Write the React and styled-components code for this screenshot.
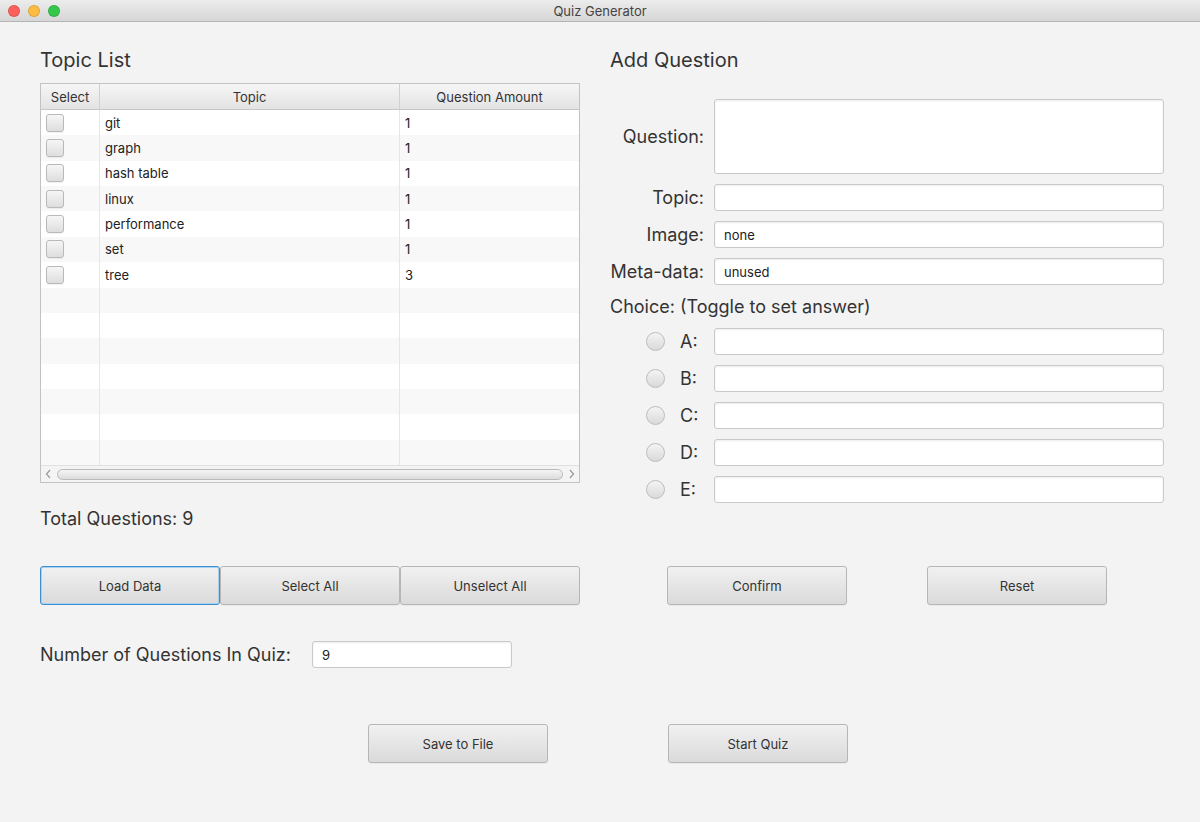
import React from "react";
import styled, { createGlobalStyle, css } from "styled-components";

const GlobalStyle = createGlobalStyle`
  html, body {
    margin: 0;
    padding: 0;
    background: #f3f3f3;
  }
  * { box-sizing: border-box; }
`;

const Window = styled.div`
  width: 1200px;
  height: 822px;
  display: flex;
  flex-direction: column;
  background: #f3f3f3;
  font-family: Inter, "Liberation Sans", sans-serif;
  color: #333;
  overflow: hidden;
`;

const TitleBar = styled.div`
  height: 22px;
  flex: none;
  display: flex;
  align-items: center;
  justify-content: center;
  position: relative;
  background: linear-gradient(#ececec, #d6d6d6);
  border-bottom: 1px solid #b4b4b4;
  font-size: 13px;
  color: #444;
`;

const Lights = styled.div`
  position: absolute;
  left: 8px;
  top: 5px;
  display: flex;
  gap: 8px;
`;

const Light = styled.span`
  width: 12px;
  height: 12px;
  border-radius: 50%;
  background: ${(p) => p.color};
  border: 1px solid rgba(0, 0, 0, 0.12);
`;

const Body = styled.div`
  flex: 1;
  padding: 26px 36px 0 40px;
  display: grid;
  grid-template-columns: 540px 554px;
  column-gap: 30px;
  row-gap: 36px;
  align-items: start;
  align-content: start;
`;

const Column = styled.div`
  display: flex;
  flex-direction: column;
`;

const Heading = styled.h2`
  margin: 0;
  font-size: 20px;
  line-height: 24px;
  font-weight: 400;
  color: #333;
`;

const Table = styled.div`
  margin-top: 11px;
  width: 540px;
  height: 400px;
  border: 1px solid #c2c2c2;
  background: #fff;
  display: flex;
  flex-direction: column;
`;

const TableRow = styled.div`
  display: grid;
  grid-template-columns: 59px 300px 1fr;
  background: ${(p) => (p.$odd ? "#f8f8f8" : "#fff")};
`;

const HeaderRow = styled(TableRow)`
  height: 26px;
  background: linear-gradient(#f6f6f6, #e3e3e3);
  border-bottom: 1px solid #c6c6c6;
`;

const HeadCell = styled.div`
  display: flex;
  align-items: center;
  justify-content: center;
  font-size: 13px;
  color: #333;
  border-right: 1px solid #d0d0d0;
  &:last-child { border-right: none; }
`;

const Rows = styled.div`
  flex: 1;
  display: grid;
  grid-template-rows: repeat(14, 1fr);
`;

const Cell = styled.div`
  display: flex;
  align-items: center;
  padding-left: 5px;
  font-size: 13px;
  color: #222;
  border-right: 1px solid #e6e6e6;
  &:last-child { border-right: none; }
`;

const Check = styled.span`
  width: 18px;
  height: 18px;
  border-radius: 3px;
  border: 1px solid #b9b9b9;
  background: linear-gradient(#f6f6f6, #dedede);
  box-shadow: 0 1px 0 rgba(0, 0, 0, 0.05);
`;

const ScrollBar = styled.div`
  height: 17px;
  border-top: 1px solid #e0e0e0;
  background: #f4f4f4;
  display: flex;
  align-items: center;
  padding: 0 4px;
  gap: 5px;
`;

const Thumb = styled.div`
  flex: 1;
  height: 11px;
  border-radius: 6px;
  border: 1px solid #b9b9b9;
  background: linear-gradient(#f5f5f5, #dcdcdc);
`;

const Arrow = styled.svg`
  width: 7px;
  height: 10px;
  flex: none;
`;

const BigText = styled.div`
  font-size: 18px;
  line-height: 22px;
  color: #333;
`;

const Total = styled(BigText)`
  margin-top: 25px;
`;

const ButtonRow = styled.div`
  display: flex;
  justify-content: ${(p) => p.$justify || "flex-start"};
  gap: ${(p) => p.$gap || 0}px;
`;

const Button = styled.button`
  width: 180px;
  height: 39px;
  border-radius: 3px;
  border: 1px solid #b6b6b6;
  background: linear-gradient(#f1f1f1, #dadada);
  font-family: Inter, "Liberation Sans", sans-serif;
  font-size: 13px;
  color: #333;
  padding: 0;
  box-shadow: 0 1px 0 rgba(0, 0, 0, 0.04);
  ${(p) =>
    p.$focused &&
    css`
      border: 1px solid #3d8fd0;
      box-shadow: inset 0 0 0 1px #a8d1f0;
    `}
`;

const QuizRow = styled.div`
  grid-column: 1 / 2;
  display: flex;
  align-items: center;
  gap: 21px;
`;

const Input = styled.div`
  height: 27px;
  width: ${(p) => (p.$width ? `${p.$width}px` : "100%")};
  background: #fff;
  border: 1px solid #c9c9c9;
  border-radius: 3px;
  box-shadow: inset 0 1px 2px rgba(0, 0, 0, 0.08);
  display: flex;
  align-items: center;
  padding-left: 9px;
  font-size: 13px;
  color: #222;
`;

const TextArea = styled(Input)`
  height: 75px;
`;

const Form = styled.div`
  margin-top: 27px;
  display: grid;
  grid-template-columns: 94px 1fr;
  column-gap: 10px;
  row-gap: 10px;
  align-items: center;
`;

const Label = styled(BigText)`
  text-align: right;
`;

const ChoiceTitle = styled(BigText)`
  grid-column: 1 / 3;
  margin-top: 1px;
`;

const ChoiceLabel = styled.div`
  display: flex;
  align-items: center;
  justify-content: flex-end;
  gap: 15px;
  padding-right: 6px;
  font-size: 18px;
  color: #333;
`;

const Letter = styled.span`
  width: 18px;
`;

const Radio = styled.span`
  width: 19px;
  height: 19px;
  border-radius: 50%;
  border: 1px solid #bdbdbd;
  background: linear-gradient(#f4f4f4, #d9d9d9);
`;

const BottomRow = styled(ButtonRow)`
  grid-column: 1 / 3;
  padding: 20px 0 0 328px;
`;

const topics = [
  ["git", 1],
  ["graph", 1],
  ["hash table", 1],
  ["linux", 1],
  ["performance", 1],
  ["set", 1],
  ["tree", 3],
];

const choices = ["A", "B", "C", "D", "E"];

const App = () => {
  const rows = Array.from({ length: 14 }, (_, i) => topics[i] || null);
  return (
    <Window>
      <GlobalStyle />
      <TitleBar>
        <Lights>
          <Light color="#fc605c" />
          <Light color="#fdbc40" />
          <Light color="#34c84a" />
        </Lights>
        Quiz Generator
      </TitleBar>
      <Body>
        <Column>
          <Heading>Topic List</Heading>
          <Table>
            <HeaderRow>
              <HeadCell>Select</HeadCell>
              <HeadCell>Topic</HeadCell>
              <HeadCell>Question Amount</HeadCell>
            </HeaderRow>
            <Rows>
              {rows.map((r, i) => (
                <TableRow key={i} $odd={i % 2 === 1}>
                  <Cell>{r && <Check />}</Cell>
                  <Cell>{r ? r[0] : ""}</Cell>
                  <Cell>{r ? r[1] : ""}</Cell>
                </TableRow>
              ))}
            </Rows>
            <ScrollBar>
              <Arrow viewBox="0 0 7 10">
                <path d="M5 1 L1.5 5 L5 9" fill="none" stroke="#999" strokeWidth="1.2" />
              </Arrow>
              <Thumb />
              <Arrow viewBox="0 0 7 10">
                <path d="M2 1 L5.5 5 L2 9" fill="none" stroke="#999" strokeWidth="1.2" />
              </Arrow>
            </ScrollBar>
          </Table>
          <Total>Total Questions: 9</Total>
        </Column>

        <Column>
          <Heading>Add Question</Heading>
          <Form>
            <Label>Question:</Label>
            <TextArea />
            <Label>Topic:</Label>
            <Input />
            <Label>Image:</Label>
            <Input>none</Input>
            <Label>Meta-data:</Label>
            <Input>unused</Input>
            <ChoiceTitle>Choice: (Toggle to set answer)</ChoiceTitle>
            {choices.map((c) => (
              <React.Fragment key={c}>
                <ChoiceLabel>
                  <Radio />
                  <Letter>{c}:</Letter>
                </ChoiceLabel>
                <Input />
              </React.Fragment>
            ))}
          </Form>
        </Column>

        <ButtonRow>
          <Button $focused>Load Data</Button>
          <Button>Select All</Button>
          <Button>Unselect All</Button>
        </ButtonRow>
        <ButtonRow $justify="center" $gap={80}>
          <Button>Confirm</Button>
          <Button>Reset</Button>
        </ButtonRow>

        <QuizRow>
          <BigText>Number of Questions In Quiz:</BigText>
          <Input $width={200}>9</Input>
        </QuizRow>

        <BottomRow $gap={120}>
          <Button>Save to File</Button>
          <Button>Start Quiz</Button>
        </BottomRow>
      </Body>
    </Window>
  );
};

export default App;
